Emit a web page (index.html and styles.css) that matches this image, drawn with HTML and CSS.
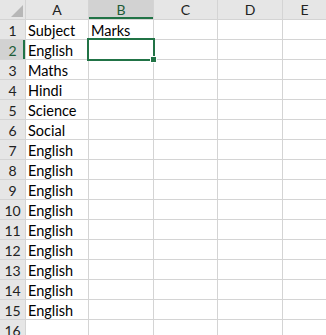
FILE: index.html
```html
<!DOCTYPE html>
<html lang="en">
<head>
    <meta charset="UTF-8">
    <title>Sheet</title>
    <link rel="stylesheet" href="styles.css">
</head>
<body>
    <div class="sheet">
        <!-- cabeçalho -->
        <div class="corner"><span class="tri"></span></div>
        <div class="colhead">A</div>
        <div class="colhead sel">B</div>
        <div class="colhead">C</div>
        <div class="colhead">D</div>
        <div class="colhead">E</div>

        <div class="rowhead">1</div>
        <div class="cell">Subject</div><div class="cell">Marks</div><div class="cell"></div><div class="cell"></div><div class="cell"></div>
        <div class="rowhead sel">2</div>
        <div class="cell">English</div><div class="cell active"><span class="box"></span><span class="handle"></span></div><div class="cell"></div><div class="cell"></div><div class="cell"></div>
        <div class="rowhead">3</div>
        <div class="cell">Maths</div><div class="cell"></div><div class="cell"></div><div class="cell"></div><div class="cell"></div>
        <div class="rowhead">4</div>
        <div class="cell">Hindi</div><div class="cell"></div><div class="cell"></div><div class="cell"></div><div class="cell"></div>
        <div class="rowhead">5</div>
        <div class="cell">Science</div><div class="cell"></div><div class="cell"></div><div class="cell"></div><div class="cell"></div>
        <div class="rowhead">6</div>
        <div class="cell">Social</div><div class="cell"></div><div class="cell"></div><div class="cell"></div><div class="cell"></div>
        <div class="rowhead">7</div>
        <div class="cell">English</div><div class="cell"></div><div class="cell"></div><div class="cell"></div><div class="cell"></div>
        <div class="rowhead">8</div>
        <div class="cell">English</div><div class="cell"></div><div class="cell"></div><div class="cell"></div><div class="cell"></div>
        <div class="rowhead">9</div>
        <div class="cell">English</div><div class="cell"></div><div class="cell"></div><div class="cell"></div><div class="cell"></div>
        <div class="rowhead">10</div>
        <div class="cell">English</div><div class="cell"></div><div class="cell"></div><div class="cell"></div><div class="cell"></div>
        <div class="rowhead">11</div>
        <div class="cell">English</div><div class="cell"></div><div class="cell"></div><div class="cell"></div><div class="cell"></div>
        <div class="rowhead">12</div>
        <div class="cell">English</div><div class="cell"></div><div class="cell"></div><div class="cell"></div><div class="cell"></div>
        <div class="rowhead">13</div>
        <div class="cell">English</div><div class="cell"></div><div class="cell"></div><div class="cell"></div><div class="cell"></div>
        <div class="rowhead">14</div>
        <div class="cell">English</div><div class="cell"></div><div class="cell"></div><div class="cell"></div><div class="cell"></div>
        <div class="rowhead">15</div>
        <div class="cell">English</div><div class="cell"></div><div class="cell"></div><div class="cell"></div><div class="cell"></div>
        <div class="rowhead">16</div>
        <div class="cell"></div><div class="cell"></div><div class="cell"></div><div class="cell"></div><div class="cell"></div>
    </div>
</body>
</html>
```

FILE: styles.css
```css
body {
    margin: 0;
    padding: 0;
    background-color: #ffffff;
    font-family: Lato, "Liberation Sans", sans-serif;
    overflow: hidden;
}

.sheet {
    display: grid;
    grid-template-columns: 25px 62px 64px 63px 64px 1fr;
    grid-auto-rows: 19px;
    gap: 1px;
    background-color: #d4d4d4;
    width: 326px;
    height: 335px;
    overflow: hidden;
}

.corner {
    background-color: #e6e6e6;
    position: relative;
}

.tri {
    position: absolute;
    right: 2px;
    bottom: 2px;
    width: 0;
    height: 0;
    border-left: 12px solid transparent;
    border-bottom: 12px solid #b7b7b7;
}

.colhead {
    background-color: #e6e6e6;
    color: #222;
    font-size: 14px;
    text-align: center;
    line-height: 19px;
}

.colhead.sel {
    background-color: #d2d2d2;
    color: #1d5b37;
    box-shadow: inset 0 -2px 0 #217346;
}

.rowhead {
    background-color: #e6e6e6;
    color: #222;
    font-size: 14px;
    text-align: center;
    line-height: 22px;
}

.rowhead.sel {
    background-color: #d2d2d2;
    color: #1d5b37;
    box-shadow: inset -2px 0 0 #217346;
}

.cell {
    background-color: #ffffff;
    color: #000;
    font-size: 14.5px;
    line-height: 22px;
    padding-left: 2px;
    white-space: nowrap;
}

.cell.active {
    position: relative;
}

.box {
    position: absolute;
    left: -2px;
    top: -2px;
    right: -2px;
    bottom: -2px;
    border: 2px solid #217346;
}

.handle {
    position: absolute;
    right: -4px;
    bottom: -4px;
    width: 5px;
    height: 5px;
    background-color: #217346;
    border: 1px solid #ffffff;
}
```
